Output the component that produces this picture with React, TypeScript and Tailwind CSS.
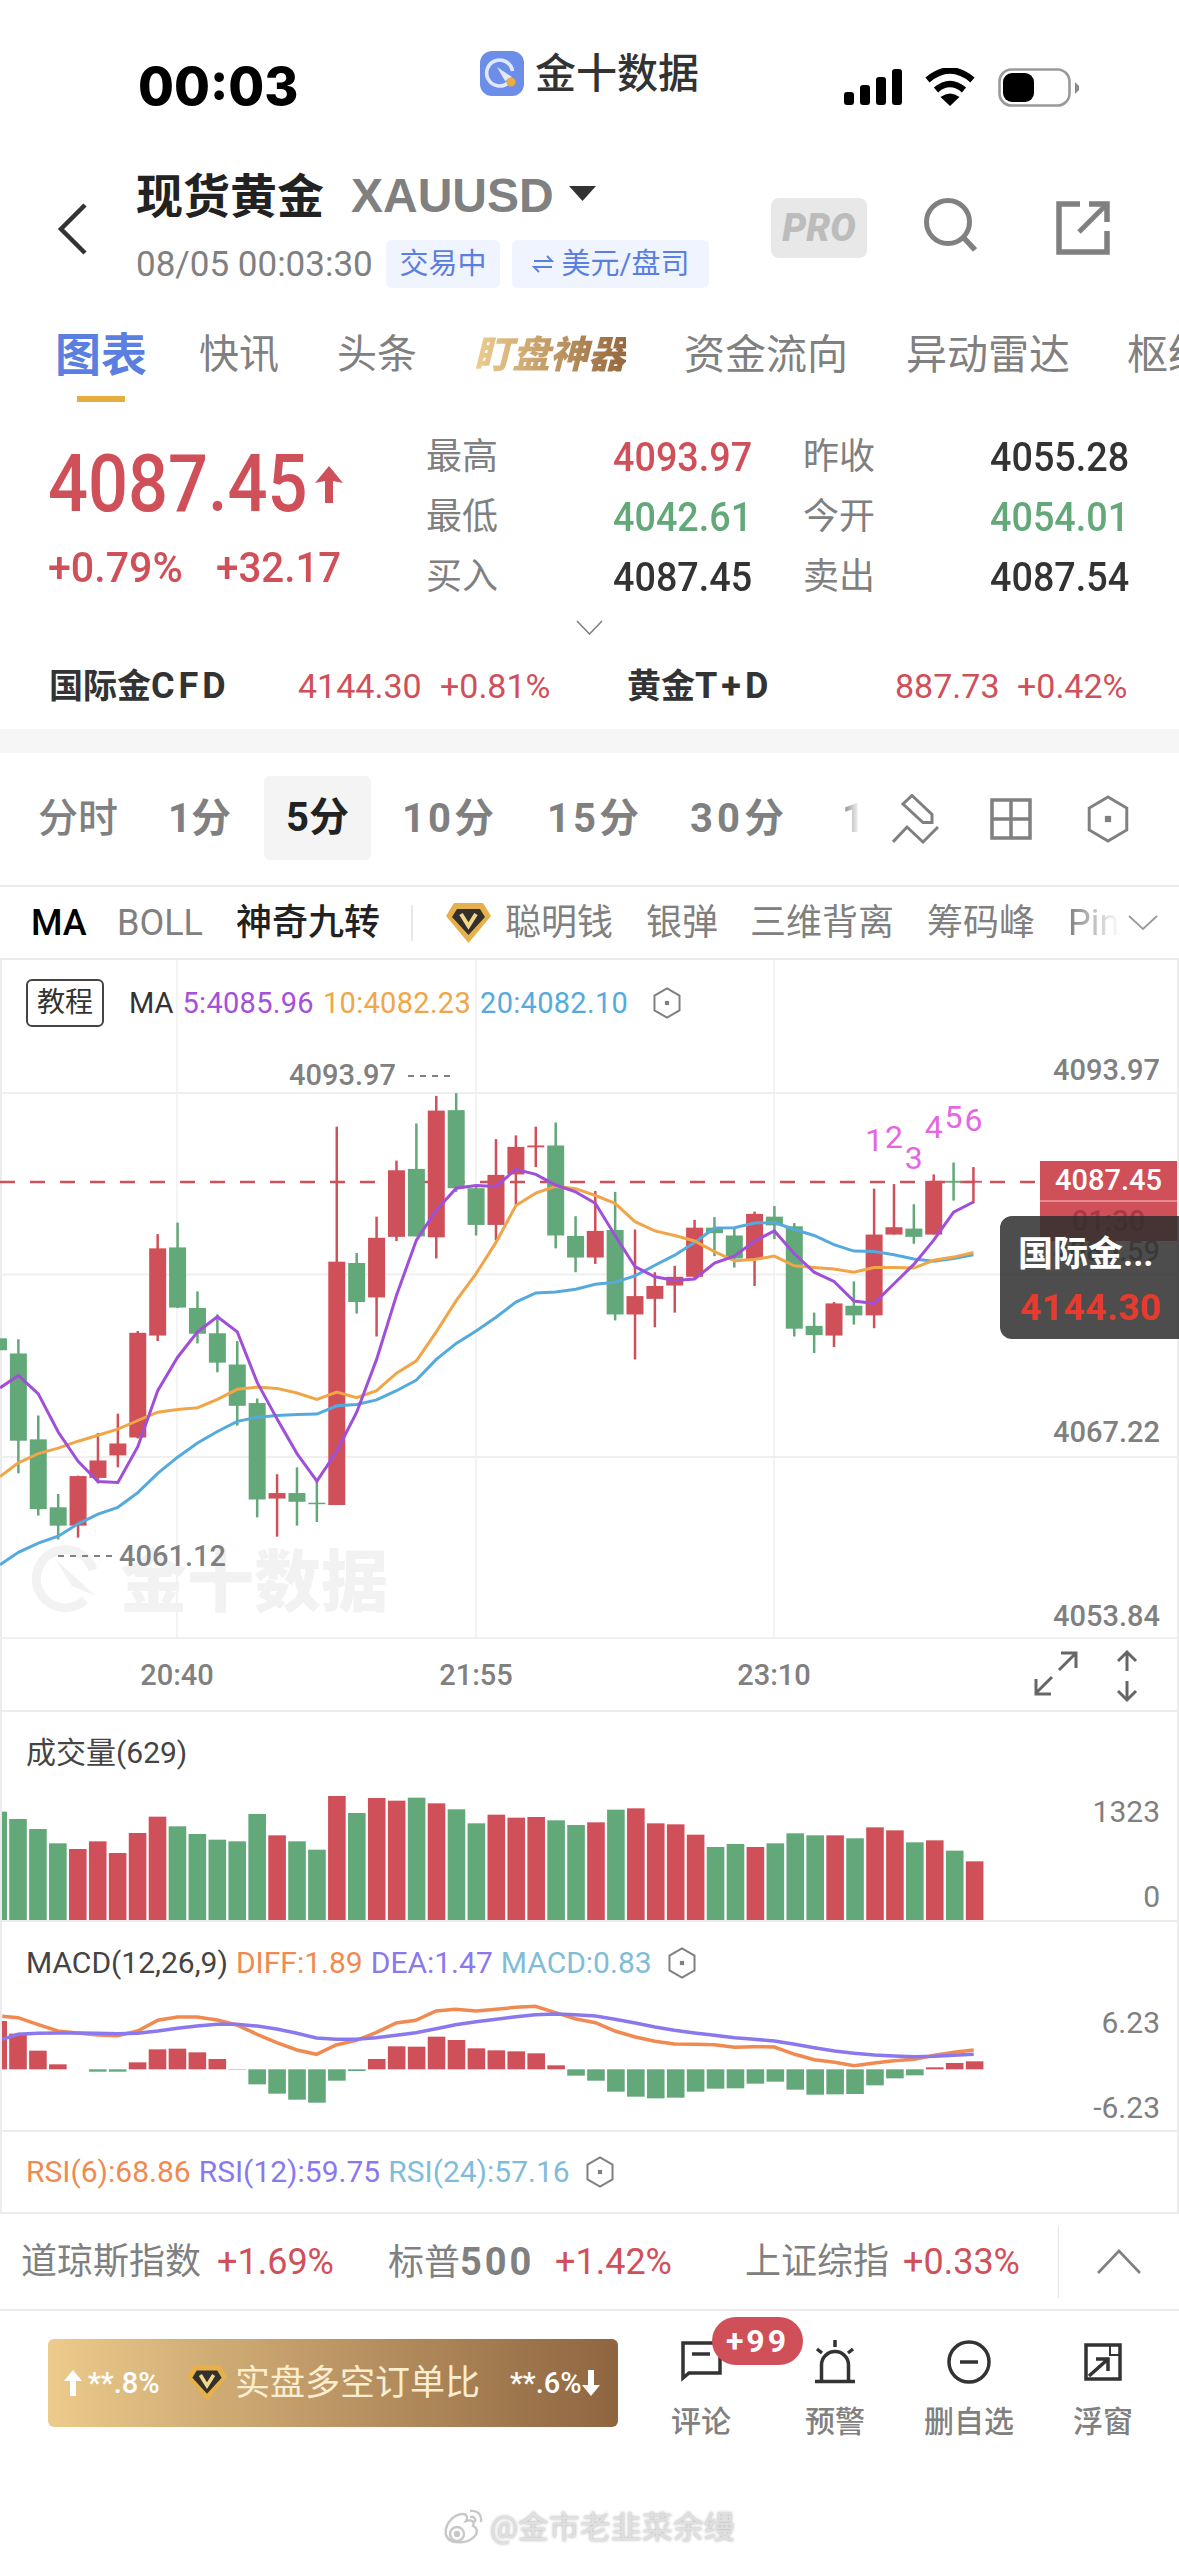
import React from "react";

const RED = "#d0505a";
const GREEN = "#62a878";

type C = [number, number, number, number, number, string];
const c3: C[] = [
  [-4,824,824,850,850,"G"],[48,826,857,1047,1118,"G"],[100,992,1044,1196,1210,"G"],[152,1163,1192,1232,1262,"G"],[204,1123,1124,1232,1258,"R"],
  [256,1030,1090,1128,1140,"R"],[308,988,1053,1079,1105,"R"],[360,808,812,1040,1042,"R"],[412,597,628,818,830,"R"],[464,572,626,757,758,"G"],
  [516,722,758,814,835,"G"],[568,772,813,877,898,"G"],[620,830,881,971,1014,"G"],[672,955,965,1175,1214,"G"],[724,1120,1161,1173,1256,"R"],
  [776,1105,1161,1180,1232,"G"],[828,1130,1182,1185,1224,"G"],[880,363,657,1187,1187,"R"],[932,638,660,745,770,"G"],[984,559,605,735,820,"R"],
  [1036,437,458,603,612,"R"],[1088,356,455,602,602,"G"],[1140,296,328,604,650,"R"],[1192,290,327,497,505,"G"],[1244,492,497,577,600,"G"],
  [1296,390,468,577,610,"R"],[1348,382,407,467,532,"R"],[1400,363,404,408,451,"R"],[1452,354,404,600,628,"G"],[1504,558,601,648,680,"G"],
];
const c4: C[] = [
  [40,503,590,648,662,"R"],[92,505,588,772,785,"G"],[144,587,732,772,870,"R"],[196,680,710,738,800,"R"],[248,666,690,709,768,"R"],
  [300,566,583,690,695,"R"],[352,560,583,595,645,"G"],[404,585,600,650,670,"G"],[457,548,553,652,710,"R"],[509,536,559,578,608,"G"],
  [561,573,580,803,820,"G"],[613,768,797,817,856,"G"],[665,745,748,818,843,"R"],[717,700,753,774,794,"G"],[770,498,598,774,802,"R"],
  [822,488,582,598,598,"R"],[874,532,585,603,618,"G"],[926,467,481,598,598,"R"],[978,441,481,485,524,"G"],[1030,451,481,485,530,"R"],
];
const fx3 = (x: number) => x / 2.613;
const fx4 = (x: number) => x / 2.618 + 580;
const fy = (y: number) => y / 2.178;

const candles = [
  ...c3.map((c) => [fx3(c[0]), ...c.slice(1, 5).map((v) => fy(v as number)), c[5]] as [number, number, number, number, number, string]),
  ...c4.map((c) => [fx4(c[0]), ...c.slice(1, 5).map((v) => fy(v as number)), c[5]] as [number, number, number, number, number, string]),
];

const line = (a3: number[][], a4: number[][]) =>
  [...a3.map(([x, y]) => `${fx3(x).toFixed(1)},${fy(y).toFixed(1)}`), ...a4.map(([x, y]) => `${fx4(x).toFixed(1)},${fy(y).toFixed(1)}`)].join(" ");

const ma5 = line(
  [[0,932],[48,905],[100,945],[152,1028],[204,1092],[256,1136],[308,1138],[360,1060],[412,938],[464,865],[516,810],[568,777],[620,810],[672,920],[724,1000],[776,1075],[828,1135],[880,1070],[932,985],[984,870],[1036,730],[1088,610],[1140,545],[1192,497],[1244,491],[1296,493],[1348,456],[1400,467],[1452,490],[1504,505]],
  [[40,530],[92,600],[144,668],[196,690],[248,698],[300,695],[352,660],[404,645],[457,612],[509,590],[561,640],[613,680],[665,700],[717,743],[770,748],[822,705],[874,663],[926,610],[978,549],[1030,527]]
);
const ma10 = line(
  [[0,1125],[48,1095],[100,1075],[152,1063],[204,1048],[256,1035],[308,1022],[360,1003],[412,985],[464,979],[516,975],[568,957],[620,935],[672,930],[724,933],[776,943],[828,957],[880,941],[932,953],[984,938],[1036,900],[1088,873],[1140,810],[1192,742],[1244,683],[1296,615],[1348,535],[1400,508],[1452,493],[1504,498]],
  [[40,513],[92,530],[144,570],[196,590],[248,600],[300,612],[352,635],[404,655],[457,652],[509,645],[561,666],[613,670],[665,673],[717,680],[770,670],[822,670],[874,671],[926,654],[978,647],[1030,637]]
);
const ma20 = line(
  [[0,1317],[48,1290],[100,1270],[152,1255],[204,1228],[256,1207],[308,1192],[360,1160],[412,1118],[464,1083],[516,1052],[568,1027],[620,1005],[672,996],[724,992],[776,990],[828,989],[880,971],[932,968],[984,958],[1036,938],[1088,915],[1140,870],[1192,835],[1244,808],[1296,778],[1348,745],[1400,725],[1452,723],[1504,717]],
  [[40,706],[92,702],[144,688],[196,665],[248,643],[300,615],[352,584],[404,583],[457,573],[509,572],[561,587],[613,600],[665,620],[717,634],[770,635],[822,642],[874,651],[926,656],[978,650],[1030,642]]
);

const volData: [number, string][] = [
  [335,"G"],[357,"G"],[387,"G"],[430,"G"],[447,"R"],[424,"R"],[459,"R"],[399,"R"],[350,"R"],[379,"G"],[402,"G"],[419,"G"],[424,"G"],[342,"G"],[406,"R"],[424,"G"],[449,"G"],[288,"R"],[339,"G"],[294,"R"],[302,"R"],[293,"G"],[310,"R"],[328,"G"],[370,"G"],[344,"R"],[353,"R"],[351,"R"],[361,"G"],[375,"G"],[367,"R"],[329,"G"],[325,"R"],[370,"R"],[373,"R"],[404,"R"],[441,"G"],[432,"G"],[441,"R"],[430,"G"],[400,"G"],[406,"G"],[406,"R"],[415,"G"],[382,"R"],[391,"R"],[427,"G"],[421,"R"],[452,"G"],[484,"R"],
];
const macdData = [960,998,1049,1090,1105,1112,1112,1084,1045,1043,1054,1074,1104,1150,1178,1196,1205,1139,1110,1074,1036,1037,1007,1017,1042,1048,1051,1057,1093,1124,1139,1172,1187,1192,1190,1172,1163,1162,1148,1142,1166,1181,1180,1179,1153,1132,1123,1099,1086,1081];
const barX = (i: number) => 18 + (i - 1) * 19.93;
const diff = [[3,946],[24,950],[50,970],[77,990],[103,996],[130,1002],[156,1004],[183,990],[210,958],[236,948],[262,948],[289,957],[315,972],[342,1000],[368,1025],[395,1047],[421,1060],[447,1032],[474,1018],[500,995],[527,966],[553,958],[580,930],[606,925],[633,930],[660,925],[686,919],[712,916],[739,935],[765,953],[792,965],[818,990],[845,1008],[871,1021],[897,1029],[924,1030],[950,1031],[977,1039],[1003,1037],[1030,1038],[1057,1060],[1083,1076],[1110,1084],[1136,1094],[1163,1086],[1189,1079],[1216,1075],[1243,1063],[1269,1054],[1295,1047]];
const dea = [[3,1015],[24,1000],[50,997],[77,996],[103,996],[130,997],[156,998],[183,997],[210,990],[236,982],[262,975],[289,970],[315,970],[342,975],[368,984],[395,997],[421,1011],[447,1015],[474,1015],[500,1010],[527,1003],[553,995],[580,983],[606,971],[633,962],[660,955],[686,947],[712,941],[739,939],[765,941],[792,945],[818,955],[845,966],[871,978],[897,988],[924,996],[950,1003],[977,1010],[1003,1015],[1030,1020],[1057,1030],[1083,1040],[1110,1050],[1136,1057],[1163,1062],[1189,1065],[1216,1067],[1243,1066],[1269,1063],[1295,1060]];
const macdPts = (a: number[][]) => a.map(([x, y]) => `${(x / 1.33).toFixed(1)},${(y / 3 - 221).toFixed(1)}`).join(" ");

const Hex = ({ w, h, sw = 2.5 }: { w: number; h: number; sw?: number }) => (
  <svg width={w} height={h} viewBox="0 0 40 46" className="shrink-0">
    <path d="M20 2 L38 12.5 V33.5 L20 44 L2 33.5 V12.5 Z" fill="none" stroke="#808080" strokeWidth={sw * (40 / w)} />
    <rect x="17" y="20" width="6" height="6" fill="#808080" />
  </svg>
);

const Gem = ({ w, h }: { w: number; h: number }) => (
  <svg width={w} height={h} viewBox="0 0 45 40" className="shrink-0">
    <polygon points="8,0 37,0 45,13 22.5,40 0,13" fill="#e8b04a" />
    <polygon points="11,6 34,6 39,14 22.5,32 6,14" fill="#34302c" />
    <path d="M15 11 L22.5 23 L30 11" fill="none" stroke="#f3d68c" strokeWidth="4" />
  </svg>
);

const Quote = ({ label, value, color }: { label: string; value: string; color: string }) => (
  <>
    <div className="text-[36px] leading-none text-[#808080] flex items-center">{label}</div>
    <div className={`text-[41px] leading-none font-medium flex items-center origin-left scale-x-[.92] ${color}`}>{value}</div>
  </>
);

export default function App() {
  return (
    <div className="w-[1179px] h-[2556px] bg-white overflow-hidden font-['Roboto','Noto_Sans_CJK_SC',sans-serif] whitespace-nowrap">
      {/* status bar */}
      <div className="h-[140px] flex items-start pl-[138px]">
        <div className="w-[342px] mt-[61px] text-[52px] leading-none font-extrabold text-black font-['Inter',sans-serif]">00:03</div>
        <svg width="44" height="45" viewBox="0 0 44 45" className="mt-[51px] shrink-0">
          <rect width="44" height="45" rx="12" fill="#6c8ee8" />
          <path d="M28 32 A13 13 0 1 1 32.5 20" fill="none" stroke="#dfe8fd" strokeWidth="3.6" />
          <path d="M17 16 L32 26 L25 30 Z" fill="#dfe8fd" />
          <circle cx="31" cy="31" r="4.6" fill="#eeaa3c" />
        </svg>
        <div className="ml-[11px] mt-[54px] text-[41px] leading-none text-[#333] font-medium">金十数据</div>
        <svg width="58" height="37" viewBox="0 0 58 37" className="ml-[145px] mt-[69px] shrink-0" fill="#000">
          <rect x="0" y="23" width="10" height="13" rx="3" />
          <rect x="16" y="16" width="10" height="20" rx="3" />
          <rect x="32" y="8" width="10" height="28" rx="3" />
          <rect x="48" y="0" width="10" height="36" rx="3" />
        </svg>
        <svg width="50" height="39" viewBox="0 0 50 39" className="ml-[23px] mt-[68px] shrink-0">
          <path d="M2.5 12 Q25 -7 47.5 12" fill="none" stroke="#000" strokeWidth="6.5" />
          <path d="M11 22 Q25 10 39 22" fill="none" stroke="#000" strokeWidth="6.5" />
          <path d="M25 38 L15.5 29 Q25 22 34.5 29 Z" fill="#000" />
        </svg>
        <svg width="82" height="40" viewBox="0 0 82 40" className="ml-[23px] mt-[68px] shrink-0">
          <rect x="1.5" y="1.5" width="70" height="36" rx="12" fill="none" stroke="#9a9a9a" strokeWidth="2.6" />
          <rect x="5" y="5" width="31" height="29" rx="9" fill="#000" />
          <path d="M77 14 L81 18 V22 L77 26 Z" fill="#8a8a8a" />
        </svg>
      </div>

      {/* header */}
      <div className="h-[170px] flex pl-[57px] pr-[69px]">
        <svg width="30" height="52" viewBox="0 0 30 52" className="mt-[63px] shrink-0">
          <path d="M28 2 L4 26 L28 50" fill="none" stroke="#333" strokeWidth="4.5" />
        </svg>
        <div className="ml-[49px] flex flex-col pt-[32px]">
          <div className="flex items-center h-[48px]">
            <span className="text-[47px] leading-none font-bold text-[#222]">现货黄金</span>
            <span className="ml-[27px] text-[48px] leading-none font-bold text-[#808080] font-['Liberation_Sans',sans-serif]">XAUUSD</span>
            <svg width="27" height="15" viewBox="0 0 27 15" className="ml-[15px] -mt-[6px]"><polygon points="0,0 27,0 13.5,15" fill="#333" /></svg>
          </div>
          <div className="flex items-center h-[48px] mt-[20px]">
            <span className="text-[35px] leading-none text-[#808080] w-[250px]">08/05 00:03:30</span>
            <span className="h-[48px] w-[114px] flex items-center justify-center rounded-[6px] bg-[#f0f4fe] text-[29px] leading-none text-[#5b7fe0]">交易中</span>
            <span className="ml-[12px] h-[48px] w-[197px] flex items-center justify-center rounded-[6px] bg-[#f0f4fe] text-[29px] leading-none text-[#5b7fe0]">
              <svg width="22" height="18" viewBox="0 0 22 18" className="mr-[8px] shrink-0"><path d="M2 6 H20 L15 1 M20 12 H2 L7 17" fill="none" stroke="#5b7fe0" strokeWidth="1.8" /></svg>
              美元/盘司
            </span>
          </div>
        </div>
        <div className="ml-auto flex items-start mt-[58px]">
          <div className="w-[96px] h-[60px] rounded-[8px] bg-[#e8e8e8] flex items-center justify-center text-[38px] leading-none font-black italic text-[#bcbcbc]">PRO</div>
          <svg width="54" height="54" viewBox="0 0 54 54" className="ml-[56px] shrink-0">
            <circle cx="25" cy="24" r="21.5" fill="none" stroke="#808080" strokeWidth="5" />
            <path d="M40 39 L52 52" stroke="#808080" strokeWidth="5.5" />
          </svg>
          <svg width="54" height="54" viewBox="0 0 54 54" className="ml-[79px] mt-[3px] shrink-0" fill="none" stroke="#808080" strokeWidth="5.5">
            <path d="M24 3 H3 V51 H51 V30" />
            <path d="M33 3 H51 V21" />
            <path d="M51 3 L23 31" strokeWidth="5" />
          </svg>
        </div>
      </div>

      {/* tabs */}
      <div className="h-[100px] flex pl-[55px] overflow-hidden">
        <div className="w-[92px] flex flex-col items-center">
          <span className="h-[70px] flex items-center text-[46px] leading-none font-bold text-[#5b7fe0] mt-[10px]">图表</span>
          <span className="w-[48px] h-[6px] bg-[#e6ae3e] mt-[6px]" />
        </div>
        <span className="ml-[52px] mt-[22px] h-[46px] flex items-center text-[40px] leading-none text-[#808080]">快讯</span>
        <span className="ml-[58px] mt-[22px] h-[46px] flex items-center text-[40px] leading-none text-[#808080]">头条</span>
        <span className="ml-[57px] mt-[22px] h-[46px] w-[154px] flex items-center text-[38px] leading-none italic font-black bg-gradient-to-r from-[#eecf90] to-[#96683e] bg-clip-text text-transparent">盯盘神器</span>
        <span className="ml-[58px] mt-[22px] h-[46px] flex items-center text-[41px] leading-none text-[#808080]">资金流向</span>
        <span className="ml-[58px] mt-[22px] h-[46px] flex items-center text-[41px] leading-none text-[#808080]">异动雷达</span>
        <span className="ml-[57px] mt-[22px] h-[46px] flex items-center text-[41px] leading-none text-[#808080]">枢纽</span>
      </div>

      {/* quote */}
      <div className="h-[204px] flex">
        <div className="w-[426px] pl-[48px] flex flex-col">
          <div className="mt-[34px] flex items-center h-[80px]">
            <span className="w-[258px] shrink-0 text-[80px] leading-none font-medium origin-left scale-x-[.88] text-[#d0505a]">4087.45</span>
            <svg width="28" height="37" viewBox="0 0 28 37" className="ml-[9px] shrink-0"><polygon points="14,0 28,17 18,15 18,37 10,37 10,15 0,17" fill="#d0505a" /></svg>
          </div>
          <div className="mt-[23px] flex items-center text-[42px] leading-none font-medium text-[#d0505a]">
            <span className="w-[168px] origin-left scale-x-[.98]">+0.79%</span>
            <span className="origin-left scale-x-[.96]">+32.17</span>
          </div>
        </div>
        <div className="grid grid-cols-[187px_190px_187px_160px] grid-rows-[60px_60px_60px] mt-[17px] h-[180px]">
          <Quote label="最高" value="4093.97" color="text-[#d0505a]" />
          <Quote label="昨收" value="4055.28" color="text-[#333]" />
          <Quote label="最低" value="4042.61" color="text-[#62a878]" />
          <Quote label="今开" value="4054.01" color="text-[#62a878]" />
          <Quote label="买入" value="4087.45" color="text-[#333]" />
          <Quote label="卖出" value="4087.54" color="text-[#333]" />
        </div>
      </div>
      <div className="h-[115px] flex flex-col">
        <svg width="27" height="15" viewBox="0 0 27 15" className="ml-[576px] mt-[6px] shrink-0"><path d="M1 1 L13.5 14 L26 1" fill="none" stroke="#808080" strokeWidth="1.6" /></svg>
        <div className="flex items-center mt-[31px] h-[40px] text-[34px] leading-none">
          <span className="ml-[49px] w-[249px] font-bold text-[#333]">国际金<span className="text-[36px] tracking-[4px]">CFD</span></span>
          <span className="w-[142px] text-[#d0505a]">4144.30</span>
          <span className="w-[187px] text-[#d0505a]">+0.81%</span>
          <span className="w-[268px] font-bold text-[#333]">黄金<span className="text-[36px] tracking-[4px]">T+D</span></span>
          <span className="w-[122px] text-[#d0505a]">887.73</span>
          <span className="text-[#d0505a]">+0.42%</span>
        </div>
      </div>
      <div className="h-[24px] bg-[#f6f6f6]" />

      {/* intervals */}
      <div className="h-[134px] border-b-2 border-[#ebebeb] flex items-center text-[40px] leading-none text-[#808080] font-bold overflow-hidden">
        <span className="ml-[38px] font-medium">分时</span>
        <span className="ml-[50px] w-[65px]">1分</span>
        <span className="ml-[31px] w-[107px] h-[84px] -mt-[2px] flex items-center justify-center rounded-[6px] bg-[#f4f4f4] text-[#222]">5分</span>
        <span className="ml-[31px] w-[95px] tracking-[3px]">10分</span>
        <span className="ml-[50px] w-[93px] tracking-[3px]">15分</span>
        <span className="ml-[50px] w-[100px] tracking-[4px]">30分</span>
        <span className="ml-[52px] w-[18px] bg-gradient-to-r from-[#808080] to-transparent bg-clip-text text-transparent">1</span>
        <svg width="47" height="50" viewBox="0 0 47 50" className="ml-[32px] shrink-0" fill="none" stroke="#808080" strokeWidth="3">
          <path d="M20 1.5 L40 20.5 V28.5 L31 28.5 L11 10 Z" />
          <path d="M1 48 L15 33 L31 48 L46 33" />
        </svg>
        <svg width="42" height="42" viewBox="0 0 42 42" className="ml-[51px] shrink-0" fill="none" stroke="#808080" strokeWidth="3.5">
          <rect x="2" y="2" width="38" height="38" />
          <path d="M21 2 V40 M2 21 H40" />
        </svg>
        <span className="ml-[55px] shrink-0"><Hex w={42} h={48} sw={3} /></span>
      </div>

      {/* indicators */}
      <div className="h-[73px] border-b-2 border-[#ebebeb] flex items-center text-[36px] leading-none text-[#808080] overflow-hidden">
        <span className="ml-[31px] w-[56px] font-medium text-black">MA</span>
        <span className="ml-[30px] w-[89px]">BOLL</span>
        <span className="ml-[30px] font-medium text-[#222]">神奇九转</span>
        <span className="ml-[31px] w-[2px] h-[36px] bg-[#e8e8e8] shrink-0" />
        <span className="ml-[33px] shrink-0"><Gem w={45} h={40} /></span>
        <span className="ml-[14px]">聪明钱</span>
        <span className="ml-[33px]">银弹</span>
        <span className="ml-[32px]">三维背离</span>
        <span className="ml-[33px]">筹码峰</span>
        <span className="ml-[33px] w-[52px] bg-gradient-to-r from-[#808080] to-transparent bg-clip-text text-transparent">Pin</span>
        <svg width="30" height="15" viewBox="0 0 30 15" className="ml-[8px] shrink-0"><path d="M1 1 L15 14 L29 1" fill="none" stroke="#9a9a9a" strokeWidth="1.8" /></svg>
      </div>

      {/* charts */}
      <div className="border-x-2 border-[#ececec]">
        {/* main */}
        <div className="relative h-[752px] border-b-2 border-[#ececec]">
          <svg width="1179" height="752" viewBox="0 0 1179 752" className="absolute top-0 -left-[2px]">
            {[177, 476, 774].map((x) => <line key={x} x1={x} x2={x} y1="0" y2="678" stroke="#ececec" strokeWidth="1.2" />)}
            {[133, 314.5, 497, 678].map((y) => <line key={y} x1="0" x2="1179" y1={y} y2={y} stroke="#efefef" strokeWidth="2" />)}
            <g fill="#f2f2f2">
              <path d="M85 640 A29 29 0 1 1 93 610" fill="none" stroke="#f2f2f2" strokeWidth="9" />
              <path d="M56 600 L96 636 L72 626 Z" fill="#f2f2f2" />
              <text x="120" y="646" fontSize="67" fontWeight="900">金十数据</text>
            </g>
            <line x1="0" x2="1040" y1="222" y2="222" stroke="#d0505a" strokeWidth="2.5" strokeDasharray="15 15" />
            {candles.map(([x, wt, bt, bb, wb, col], i) => (
              <g key={i} fill={col === "R" ? RED : GREEN}>
                <rect x={x - 1.25} y={wt} width="2.5" height={wb - wt} />
                <rect x={x - 8.5} y={bt} width="17" height={Math.max(bb - bt, 1.5)} />
              </g>
            ))}
            <polyline points={ma20} fill="none" stroke="#55aadd" strokeWidth="3" />
            <polyline points={ma10} fill="none" stroke="#f0a648" strokeWidth="3" />
            <polyline points={ma5} fill="none" stroke="#a04fd8" strokeWidth="3" />
            <g fontSize="32" fill="#e566e0" textAnchor="middle">
              <text x={fx4(770)} y={fy(417)}>1</text>
              <text x={fx4(822)} y={fy(410)}>2</text>
              <text x={fx4(874)} y={fy(455)}>3</text>
              <text x={fx4(926)} y={fy(388)}>4</text>
              <text x={fx4(978)} y={fy(365)}>5</text>
              <text x={fx4(1030)} y={fy(372)}>6</text>
            </g>
            <g fontSize="29" fontWeight="500" fill="#808080">
              <text x="289" y="125">4093.97</text>
              <line x1="408" x2="450" y1="116" y2="116" stroke="#808080" strokeWidth="2" strokeDasharray="6 6" />
              <text x="119" y="606">4061.12</text>
              <line x1="58" x2="112" y1="596" y2="596" stroke="#808080" strokeWidth="2" strokeDasharray="6 6" />
              <text x="177" y="725" textAnchor="middle">20:40</text>
              <text x="476" y="725" textAnchor="middle">21:55</text>
              <text x="774" y="725" textAnchor="middle">23:10</text>
              <text x="1160" y="120" textAnchor="end">4093.97</text>
              <text x="1160" y="482" textAnchor="end">4067.22</text>
              <text x="1160" y="666" textAnchor="end">4053.84</text>
              <text x="1160" y="301" textAnchor="end">4080.59</text>
            </g>
            <g fill="none" stroke="#666" strokeWidth="3">
              <path d="M1059 710 L1075 694 M1061 693 H1076 V708 M1052 717 L1036 733 M1036 719 V734 H1051" />
              <path d="M1127 692 V711 M1118 701 L1127 692 L1136 701 M1127 721 V740 M1118 731 L1127 740 L1136 731" />
            </g>
          </svg>
          <div className="absolute left-[24px] top-[19px] flex items-center text-[29px] leading-none">
            <span className="w-[78px] h-[48px] flex items-center justify-center rounded-[6px] border-2 border-[#444] text-[28px] text-[#333]">教程</span>
            <span className="ml-[25px] text-[#333]">MA</span>
            <span className="ml-[9px] text-[#a64fd8] tracking-[0.3px]">5:4085.96</span>
            <span className="ml-[9px] text-[#f0a648] tracking-[0.3px]">10:4082.23</span>
            <span className="ml-[9px] text-[#55aadd] tracking-[0.3px]">20:4082.10</span>
            <span className="ml-[25px]"><Hex w={28} h={32} sw={2} /></span>
          </div>
          <div className="absolute left-[1038px] top-[201px] w-[137px] h-[80px] bg-[#d0505a] flex flex-col items-center text-[29px] leading-none font-medium">
            <span className="h-[41px] flex items-center text-white border-b-2 border-[#e58a90] w-full justify-center">4087.45</span>
            <span className="h-[39px] flex items-center text-[#a93a44]">01:30</span>
          </div>
          <div className="absolute left-[998px] top-[256px] w-[179px] h-[123px] rounded-l-[12px] bg-[#2e2e2e]/85 flex flex-col pl-[18px] leading-none">
            <span className="mt-[20px] h-[36px] flex items-center text-[35px] font-bold text-white">国际金...</span>
            <span className="mt-[17px] ml-[2px] text-[37px] font-bold tracking-[0.5px] text-[#e63b2e]">4144.30</span>
          </div>
        </div>

        {/* volume */}
        <div className="relative h-[210px] border-b-2 border-[#ececec]">
          <svg width="1179" height="208" viewBox="0 0 1179 208" className="absolute top-0 -left-[2px]">
            {volData.map(([t, c], i) =>
              i === 0 ? (
                <rect key={i} x="2" y={t / 3 - 12} width="5" height={209 - (t / 3 - 12)} fill={GREEN} />
              ) : (
                <rect key={i} x={barX(i) - 8.8} y={t / 3 - 12} width="17.6" height={209 - (t / 3 - 12)} fill={c === "R" ? RED : GREEN} />
              )
            )}
            <g fontSize="30" fill="#808080" textAnchor="end">
              <text x="1160" y="110">1323</text>
              <text x="1160" y="195">0</text>
            </g>
          </svg>
          <div className="absolute left-[24px] top-[26px] text-[30px] leading-none text-[#444]">成交量(629)</div>
        </div>

        {/* macd */}
        <div className="relative h-[210px] border-b-2 border-[#ececec]">
          <svg width="1179" height="208" viewBox="0 0 1179 208" className="absolute top-0 -left-[2px]">
            {macdData.map((t, i) => {
              const y = t / 3 - 221;
              const z = 1105 / 3 - 221;
              const red = t < 1105;
              const x = i === 0 ? 2 : barX(i) - 8.8;
              const w = i === 0 ? 5 : 17.6;
              return <rect key={i} x={x} y={Math.min(y, z)} width={w} height={Math.abs(y - z)} fill={red ? RED : GREEN} />;
            })}
            <polyline points={macdPts(diff)} fill="none" stroke="#f08a50" strokeWidth="3.5" />
            <polyline points={macdPts(dea)} fill="none" stroke="#8a78ef" strokeWidth="3.5" />
            <g fontSize="30" fill="#808080" textAnchor="end">
              <text x="1160" y="111">6.23</text>
              <text x="1160" y="196">-6.23</text>
            </g>
          </svg>
          <div className="absolute left-[24px] top-[25px] flex items-center text-[30px] leading-none">
            <span className="text-[#444]">MACD(12,26,9)</span>
            <span className="ml-[8px] text-[#f08a50]">DIFF:1.89</span>
            <span className="ml-[8px] text-[#8a78ef]">DEA:1.47</span>
            <span className="ml-[8px] text-[#7fbcd8]">MACD:0.83</span>
            <span className="ml-[16px]"><Hex w={28} h={32} sw={2} /></span>
          </div>
        </div>

        {/* rsi */}
        <div className="h-[82px] border-b-2 border-[#ececec] flex items-center pl-[24px] text-[30px] leading-none">
          <span className="text-[#f08a50]">RSI(6):68.86</span>
          <span className="ml-[8px] text-[#8a78ef]">RSI(12):59.75</span>
          <span className="ml-[8px] text-[#7fbcd8]">RSI(24):57.16</span>
          <span className="ml-[16px]"><Hex w={28} h={32} sw={2} /></span>
        </div>
      </div>

      {/* index strip */}
      <div className="h-[97px] border-b-2 border-[#ebebeb] flex items-center text-[36px] leading-none">
        <span className="ml-[21px] w-[196px] text-[#808080]">道琼斯指数</span>
        <span className="w-[171px] text-[#d0505a]">+1.69%</span>
        <span className="w-[167px] text-[#808080]">标普<span className="font-bold text-[38px] tracking-[3px]">500</span></span>
        <span className="w-[190px] text-[#d0505a]">+1.42%</span>
        <span className="w-[158px] text-[#808080]">上证综指</span>
        <span className="w-[155px] text-[#d0505a]">+0.33%</span>
        <span className="w-[1px] h-[72px] bg-[#e4e4e4]" />
        <svg width="44" height="25" viewBox="0 0 44 25" className="ml-[38px] shrink-0"><path d="M1 24 L22 2 L43 24" fill="none" stroke="#808080" strokeWidth="2.6" /></svg>
      </div>

      {/* actions */}
      <div className="h-[197px] flex items-start pl-[48px]">
        <div className="mt-[28px] w-[570px] h-[88px] rounded-[6px] bg-gradient-to-r from-[#eccb8c] to-[#8e6540] flex items-center leading-none text-white">
          <svg width="18" height="26" viewBox="0 0 18 26" className="ml-[16px] shrink-0"><polygon points="9,0 18,11 12,11 12,26 6,26 6,11 0,11" fill="#fff" /></svg>
          <span className="ml-[6px] w-[99px] text-[29px] font-medium">**.8%</span>
          <span className="shrink-0"><Gem w={40} h={40} /></span>
          <span className="ml-[8px] w-[275px] text-[35px] text-[#fbeed0]">实盘多空订单比</span>
          <span className="w-[72px] text-[29px] font-medium">**.6%</span>
          <svg width="18" height="26" viewBox="0 0 18 26" className="shrink-0"><polygon points="9,26 18,15 12,15 12,0 6,0 6,15 0,15" fill="#fff" /></svg>
        </div>
        <div className="ml-[16px] flex text-[30px] leading-none text-[#808080] font-medium">
          <div className="relative w-[134px] flex flex-col items-center">
            <svg width="41" height="41" viewBox="0 0 41 41" className="mt-[30px]" fill="none" stroke="#333" strokeWidth="3.5">
              <path d="M2 37 V2 H39 V32 H8 Z" />
              <path d="M11 13 H29" />
            </svg>
            <span className="mt-[25px]">评论</span>
            <span className="absolute left-[78px] top-[6px] w-[91px] h-[48px] rounded-full bg-[#d0505a] flex items-center justify-center text-[32px] font-bold tracking-[3px] text-white">+99</span>
          </div>
          <div className="w-[134px] flex flex-col items-center">
            <svg width="40" height="44" viewBox="0 0 40 44" className="mt-[29px]" fill="none" stroke="#333" strokeWidth="3.5">
              <path d="M0 41.5 H40" />
              <path d="M6.5 41 V25 A13.5 13.5 0 0 1 33.5 25 V41" />
              <path d="M20 0 V7 M2 9 L7 13 M38 9 L33 13" />
            </svg>
            <span className="mt-[23px]">预警</span>
          </div>
          <div className="w-[134px] flex flex-col items-center">
            <svg width="44" height="44" viewBox="0 0 44 44" className="mt-[29px]" fill="none" stroke="#333" strokeWidth="3.5">
              <circle cx="22" cy="22" r="20" />
              <path d="M13 22 H31" />
            </svg>
            <span className="mt-[23px]">删自选</span>
          </div>
          <div className="w-[134px] flex flex-col items-center">
            <svg width="38" height="38" viewBox="0 0 38 38" className="mt-[32px]" fill="none" stroke="#333" strokeWidth="3.5">
              <path d="M2 2 H36 V36 H2 Z" />
              <path d="M26 2 V12 H36" stroke="#333" strokeWidth="2" />
              <path d="M5 33 L23 17 M12 16 H24 V28" strokeWidth="3.5" />
            </svg>
            <span className="mt-[26px]">浮窗</span>
          </div>
        </div>
      </div>

      {/* watermark */}
      <div className="flex items-center pl-[442px] text-[31px] leading-none text-[#e0e0e0] [text-shadow:0_0_3px_#a8a8a8]">
        <svg width="44" height="38" viewBox="0 0 44 38" className="shrink-0" fill="none" stroke="#c8c8c8" strokeWidth="2.4">
          <path d="M4 27 C2 16 12 6 21 6 C25 6 26 10 24 13 C30 11 33 14 31 18 C36 20 36 25 32 29 C26 35 8 38 4 27 Z" />
          <circle cx="15" cy="26" r="7" />
          <circle cx="15" cy="26" r="2" fill="#c8c8c8" />
          <path d="M28 3 C35 2 40 6 39 14 M28 9 C31 8 34 10 33 14" />
        </svg>
        <span className="ml-[4px]">@金市老韭菜余缦</span>
      </div>
    </div>
  );
}
